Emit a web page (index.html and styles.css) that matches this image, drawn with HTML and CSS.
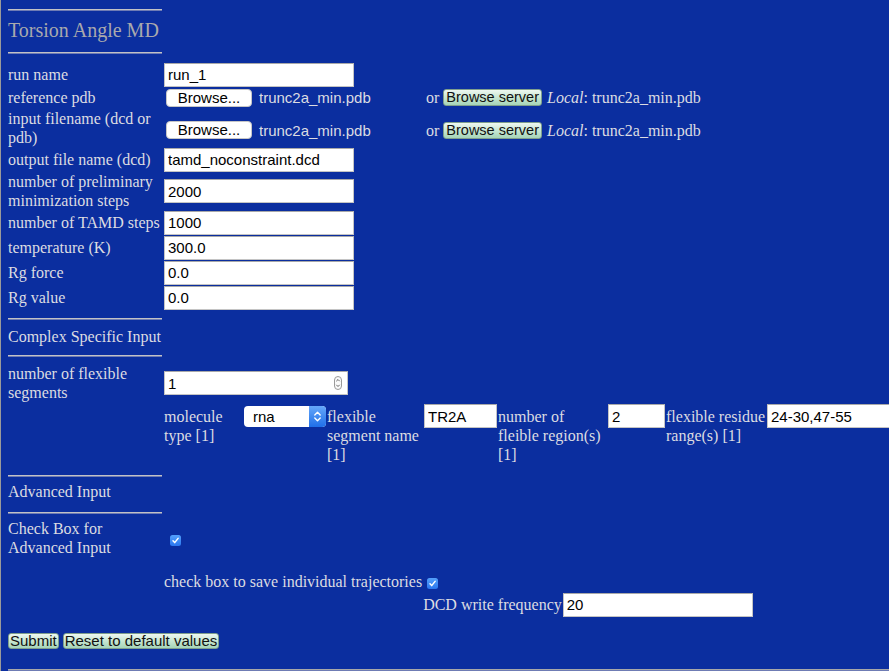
FILE: index.html
```html
<!DOCTYPE html>
<html lang="en">
<head>
<meta charset="utf-8">
<title>Torsion Angle MD</title>
<link rel="stylesheet" href="styles.css">
</head>
<body>
<div class="page">
  <hr class="rule">
  <h2 class="title">Torsion Angle MD</h2>
  <hr class="rule">

  <div class="form">
    <div class="row row-1">
      <div class="lbl">run name</div>
      <input class="txt" type="text" value="run_1">
    </div>
    <div class="row row-file">
      <div class="lbl">reference pdb</div>
      <div class="file">
        <span class="filebox"><button class="browse" type="button">Browse...</button><span class="fname">trunc2a_min.pdb</span></span>
        <span class="or">or</span>
        <button class="gbtn gbtn-sm" type="button">Browse server</button>
        <span class="local"><i>Local</i>: trunc2a_min.pdb</span>
      </div>
    </div>
    <div class="row row-file2">
      <div class="lbl">input filename (dcd or pdb)</div>
      <div class="file file-low">
        <span class="filebox"><button class="browse" type="button">Browse...</button><span class="fname">trunc2a_min.pdb</span></span>
        <span class="or">or</span>
        <button class="gbtn gbtn-sm" type="button">Browse server</button>
        <span class="local"><i>Local</i>: trunc2a_min.pdb</span>
      </div>
    </div>
    <div class="row row-1">
      <div class="lbl">output file name (dcd)</div>
      <input class="txt" type="text" value="tamd_noconstraint.dcd">
    </div>
    <div class="row row-2">
      <div class="lbl">number of preliminary minimization steps</div>
      <input class="txt" type="text" value="2000">
    </div>
    <div class="row row-1">
      <div class="lbl">number of TAMD steps</div>
      <input class="txt" type="text" value="1000">
    </div>
    <div class="row row-1">
      <div class="lbl">temperature (K)</div>
      <input class="txt" type="text" value="300.0">
    </div>
    <div class="row row-1">
      <div class="lbl">Rg force</div>
      <input class="txt" type="text" value="0.0">
    </div>
    <div class="row row-1">
      <div class="lbl">Rg value</div>
      <input class="txt" type="text" value="0.0">
    </div>
  </div>

  <hr class="rule rule-sec">
  <div class="sec-head">Complex Specific Input</div>
  <hr class="rule">

  <div class="row row-2 row-seg">
    <div class="lbl">number of flexible segments</div>
    <span class="num">
      <input class="txt txt-num" type="text" value="1">
      <svg class="spin" width="8" height="14" viewBox="0 0 8 14" aria-hidden="true">
        <rect x="0.5" y="0.5" width="7" height="13" rx="3.5" fill="#fafafa" stroke="#9a9a9a"/>
        <path d="M2.3 5.2 L4 3.5 L5.7 5.2 M2.3 8.8 L4 10.5 L5.7 8.8" fill="none" stroke="#555" stroke-width="0.9"/>
      </svg>
    </span>
  </div>

  <div class="nested">
    <div class="nlbl w-mol">molecule type [1]</div>
    <span class="sel">
      <span class="sel-text">rna</span>
      <span class="sel-arrow">
        <svg width="9" height="13" viewBox="0 0 9 13" aria-hidden="true">
          <path d="M1.8 5 L4.5 2.3 L7.2 5 M1.8 8 L4.5 10.7 L7.2 8" fill="none" stroke="#fff" stroke-width="1.4" stroke-linecap="round" stroke-linejoin="round"/>
        </svg>
      </span>
    </span>
    <div class="nlbl w-seg">flexible segment name [1]</div>
    <input class="txt w-tr" type="text" value="TR2A">
    <div class="nlbl w-reg">number of fleible region(s) [1]</div>
    <input class="txt w-two" type="text" value="2">
    <div class="nlbl w-rng">flexible residue range(s) [1]</div>
    <input class="txt w-range" type="text" value="24-30,47-55">
  </div>

  <hr class="rule rule-adv">
  <div class="sec-head sec-adv">Advanced Input</div>
  <hr class="rule">

  <div class="row row-2 row-check">
    <div class="lbl">Check Box for Advanced Input</div>
    <span class="cb cb-adv"><svg width="11" height="11" viewBox="0 0 11 11" aria-hidden="true"><path d="M3 5.8 L4.7 7.6 L8.1 3.4" fill="none" stroke="#fff" stroke-width="1.5" stroke-linecap="round" stroke-linejoin="round"/></svg></span>
  </div>

  <div class="adv">
    <div class="adv-text">check box to save individual trajectories</div>
    <div class="adv-cbcell"><span class="cb"><svg width="11" height="11" viewBox="0 0 11 11" aria-hidden="true"><path d="M3 5.8 L4.7 7.6 L8.1 3.4" fill="none" stroke="#fff" stroke-width="1.5" stroke-linecap="round" stroke-linejoin="round"/></svg></span></div>
    <div class="adv-empty"></div>
    <div class="adv-empty"></div>
    <div class="adv-dcd">DCD write frequency</div>
    <input class="txt" type="text" value="20">
  </div>

  <div class="actions">
    <button class="gbtn" type="button">Submit</button>
    <button class="gbtn" type="button">Reset to default values</button>
  </div>

  <hr class="rule rule-bottom">
</div>
</body>
</html>
```

FILE: styles.css
```css
html {
  background: #0b2e9f;
  overflow: hidden;
}

body {
  margin: 0;
  min-height: 671px;
  background: #0b2e9f;
  border-left: 1px solid #9a9a9a;
  color: #dcdce2;
  font-family: "Liberation Serif", "Times New Roman", serif;
  font-size: 16px;
  line-height: 19px;
}

.page {
  padding: 9px 0 0 7px;
}

.rule {
  width: 154px;
  height: 0;
  margin: 0;
  border: 0;
  border-top: 1px solid #c2c2c6;
  border-bottom: 1px solid #6f7cb4;
}

.title {
  margin: 8px 0 10px;
  font-size: 20px;
  line-height: 23px;
  font-weight: normal;
  color: #a9a9ad;
}

.form {
  margin-top: 8px;
}

.row {
  display: flex;
  align-items: center;
}

.row-1 { height: 25px; }
.row-2 { height: 38px; }
.row-file { height: 21px; }
.row-file2 { height: 39px; }

.lbl {
  flex: none;
  width: 154px;
  margin-right: 2px;
}

.txt {
  flex: none;
  box-sizing: border-box;
  width: 190px;
  height: 24px;
  margin: 0;
  padding: 0 3px;
  border: 1px solid #c4c4c4;
  border-top-color: #a9a9a9;
  border-radius: 0;
  background: #fff;
  color: #000;
  font: 15px "Liberation Sans", Arial, sans-serif;
  outline: none;
}

/* file chooser rows */
.file {
  display: flex;
  align-items: center;
  white-space: nowrap;
}

.file-low {
  align-self: stretch;
  padding-top: 5px;
}

.filebox {
  display: flex;
  align-items: center;
  width: 258px;
}

.browse {
  box-sizing: border-box;
  width: 86px;
  height: 18px;
  margin: 0 0 0 2px;
  padding: 0;
  border: 1px solid #c6c6c6;
  border-radius: 4px;
  background: #fff;
  color: #000;
  font: 15px/16px "Liberation Sans", Arial, sans-serif;
  text-align: center;
}

.fname {
  margin-left: 7px;
  font: 15px "Liberation Sans", Arial, sans-serif;
  color: #dcdce2;
}

.or {
  margin-left: 4px;
}

.local {
  margin-left: 5px;
}

/* greenish aqua buttons */
.gbtn {
  box-sizing: border-box;
  height: 16px;
  margin: 0;
  padding: 0 1px;
  border: 1px solid #7f9f8d;
  border-radius: 3px;
  background: linear-gradient(to bottom, #eef8f1 0%, #cbe8d5 45%, #a6d5b8 100%);
  color: #111;
  font: 15px/14px "Liberation Sans", Arial, sans-serif;
  white-space: nowrap;
}

.gbtn-sm {
  height: 17px;
  margin-left: 4px;
  padding: 0 2px;
  font-size: 14.5px;
  line-height: 15px;
}

/* section headings */
.rule-sec { margin-top: 8px; }

.sec-head {
  margin: 7px 0 9px;
}

.rule-adv { margin-top: 11px; }

.sec-adv {
  margin: 5px 0 11px;
}

/* flexible segments */
.row-seg {
  margin-top: 7px;
}

.num {
  position: relative;
  display: block;
}

.txt-num {
  width: 184px;
}

.spin {
  position: absolute;
  top: 5px;
  right: 6px;
}

.nested {
  display: flex;
  align-items: baseline;
  margin: 2px 0 0 156px;
}

.nlbl { flex: none; }
.w-mol { width: 80px; }
.w-seg { width: 97px; margin-left: 1px; }
.w-reg { width: 109px; margin-left: 1px; }
.w-rng { width: 100px; margin-left: 1px; }

.w-tr { width: 73px; }
.w-two { width: 57px; margin-left: 1px; }
.w-range { width: 190px; margin-left: 1px; }

.sel {
  flex: none;
  display: flex;
  width: 82px;
  height: 21px;
  border-radius: 4px;
  background: #fff;
  color: #000;
  font: 15px/21px "Liberation Sans", Arial, sans-serif;
}

.sel-text {
  flex: 1;
  padding-left: 9px;
}

.sel-arrow {
  display: flex;
  align-items: center;
  justify-content: center;
  width: 17px;
  border-radius: 0 4px 4px 0;
  background: linear-gradient(to bottom, #66a8fa, #1f6fe8);
}

/* checkboxes */
.cb {
  display: block;
  width: 11px;
  height: 11px;
  border-radius: 2.5px;
  background: linear-gradient(to bottom, #54a0fb, #2b77ef);
}

.cb svg { display: block; }

.row-check {
  margin-top: 5px;
}

.cb-adv {
  align-self: flex-start;
  margin: 16px 0 0 6px;
}

.adv {
  display: grid;
  grid-template-columns: auto auto auto;
  justify-content: start;
  align-items: center;
  column-gap: 1px;
  row-gap: 2px;
  margin: 15px 0 0 156px;
}

.adv-text {
  white-space: nowrap;
  align-self: start;
}

.adv-cbcell {
  display: flex;
  align-self: start;
  padding: 6px 0 0 4px;
}

.adv-dcd {
  white-space: nowrap;
}

.actions {
  display: flex;
  gap: 4px;
  margin-top: 16px;
}

.rule-bottom {
  width: auto;
  margin-top: 20px;
  border-top-color: #a8a8a8;
}
```
